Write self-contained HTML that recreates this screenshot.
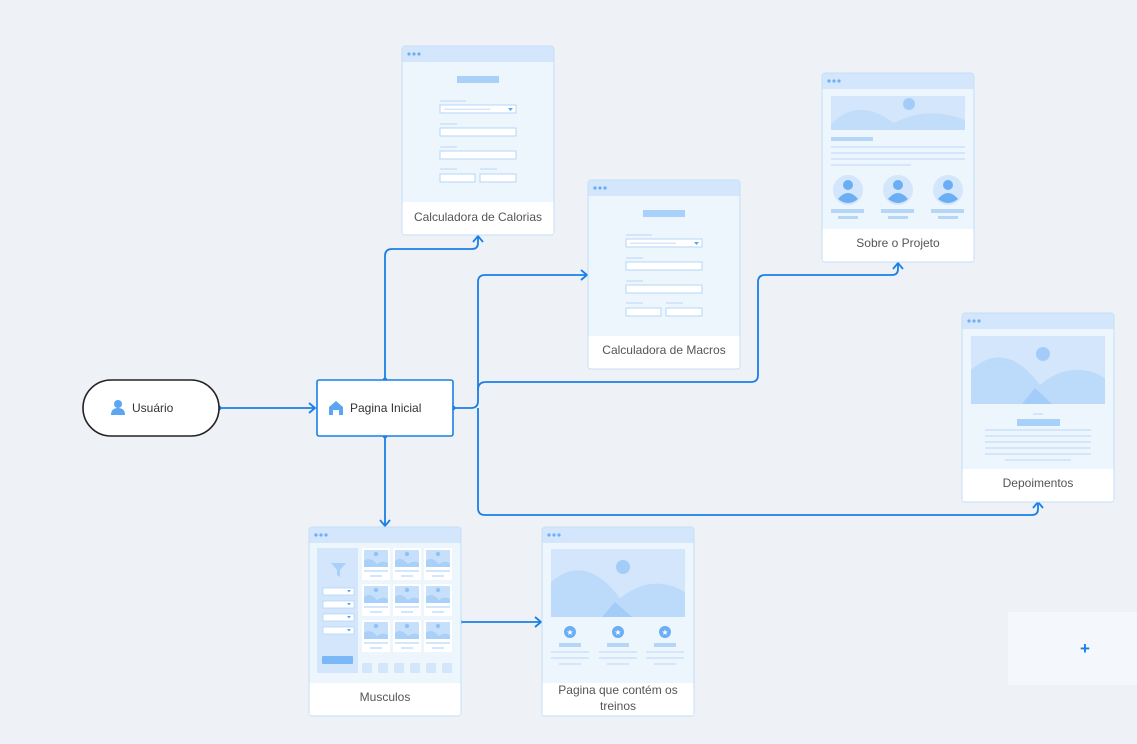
<!DOCTYPE html>
<html><head><meta charset="utf-8"><style>
html,body{margin:0;padding:0;background:#eef2f7;}
svg{display:block}
text{font-family:"Liberation Sans",sans-serif;}
</style></head><body>
<svg width="1137" height="744" viewBox="0 0 1137 744" xmlns="http://www.w3.org/2000/svg">
<rect width="1137" height="744" fill="#eef2f7"/>
<rect x="1008" y="612" width="129" height="73" fill="#f4f7fb"/>
<text x="1085" y="654" font-size="17" font-weight="bold" fill="#1a7fe6" text-anchor="middle">+</text>

<g fill="none" stroke="#1a7fe6" stroke-width="1.8">
<path d="M219 408 H315"/><path d="M309 403 L315 408 L309 413"/>
<path d="M385 380 V256 Q385 249 392 249 H472 Q478 249 478 243 V237"/><path d="M473 242 L478 236 L483 242"/>
<path d="M453 408 H471 Q478 408 478 401 V282 Q478 275 485 275 H587"/><path d="M581 270 L587 275 L581 280"/>
<path d="M478 390 Q478 382 486 382 H751 Q758 382 758 375 V282 Q758 275 765 275 H892 Q898 275 898 269 V264"/><path d="M893 269 L898 263 L903 269"/>
<path d="M478 408 V508 Q478 515 485 515 H1032 Q1038 515 1038 509 V503"/><path d="M1033 508 L1038 502 L1043 508"/>
<path d="M385 436 V526"/><path d="M380 520 L385 526 L390 520"/>
<path d="M460 622 H541"/><path d="M535 617 L541 622 L535 627"/>
</g>
<g fill="#1a7fe6"><circle cx="219" cy="408" r="2.4"/><circle cx="453" cy="408" r="2.4"/><circle cx="385" cy="380" r="2.4"/><circle cx="385" cy="436" r="2.4"/><circle cx="460" cy="622" r="2.4"/></g>

<rect x="83" y="380" width="136" height="56" rx="28" fill="#fff" stroke="#222" stroke-width="1.6"/>
<g fill="#5aa6f2"><circle cx="118" cy="404" r="4"/><path d="M111 415 Q111 408 118 408 Q125 408 125 415 Z"/></g>
<text x="132" y="412" font-size="12" fill="#333">Usuário</text>
<rect x="317" y="380" width="136" height="56" rx="2" fill="#fff" stroke="#1a7fe6" stroke-width="1.6"/>
<path d="M329 415 V407 L336 401 L343 407 V415 H339 V410 H333 V415 Z" fill="#5aa6f2"/>
<text x="350" y="412" font-size="12" fill="#333">Pagina Inicial</text>

<g transform="translate(402,46)">
<rect x="0" y="0" width="152" height="189" rx="3" fill="#fff" stroke="#c4ddf7"/>
<rect x="0.5" y="0.5" width="151" height="16" fill="#d3e6fb"/><rect x="0.5" y="16" width="151" height="140" fill="#edf5fd"/>
<g fill="#6aaef5"><circle cx="7" cy="8" r="1.6"/><circle cx="12" cy="8" r="1.6"/><circle cx="17" cy="8" r="1.6"/></g>
<rect x="55" y="30" width="42" height="7" fill="#a9d0f8"/>
<g fill="#d3e6fb"><rect x="38" y="54" width="26" height="2"/><rect x="38" y="77" width="17" height="2"/><rect x="38" y="100" width="17" height="2"/><rect x="38" y="122" width="17" height="2"/><rect x="78" y="122" width="17" height="2"/></g>
<g fill="#fff" stroke="#b5d6f7"><rect x="38" y="59" width="76" height="8"/><rect x="38" y="82" width="76" height="8"/><rect x="38" y="105" width="76" height="8"/><rect x="38" y="128" width="35" height="8"/><rect x="78" y="128" width="36" height="8"/></g>
<rect x="42" y="62.5" width="46" height="1.5" fill="#d3e6fb"/><path d="M106 62 L111 62 L108.5 65 Z" fill="#5aa6f2"/>
<rect x="0.5" y="156" width="151" height="32" fill="#fff"/>
<text x="76" y="175" font-size="12" fill="#555" text-anchor="middle">Calculadora de Calorias</text>
</g>

<g transform="translate(588,180)">
<rect x="0" y="0" width="152" height="189" rx="3" fill="#fff" stroke="#c4ddf7"/>
<rect x="0.5" y="0.5" width="151" height="16" fill="#d3e6fb"/><rect x="0.5" y="16" width="151" height="140" fill="#edf5fd"/>
<g fill="#6aaef5"><circle cx="7" cy="8" r="1.6"/><circle cx="12" cy="8" r="1.6"/><circle cx="17" cy="8" r="1.6"/></g>
<rect x="55" y="30" width="42" height="7" fill="#a9d0f8"/>
<g fill="#d3e6fb"><rect x="38" y="54" width="26" height="2"/><rect x="38" y="77" width="17" height="2"/><rect x="38" y="100" width="17" height="2"/><rect x="38" y="122" width="17" height="2"/><rect x="78" y="122" width="17" height="2"/></g>
<g fill="#fff" stroke="#b5d6f7"><rect x="38" y="59" width="76" height="8"/><rect x="38" y="82" width="76" height="8"/><rect x="38" y="105" width="76" height="8"/><rect x="38" y="128" width="35" height="8"/><rect x="78" y="128" width="36" height="8"/></g>
<rect x="42" y="62.5" width="46" height="1.5" fill="#d3e6fb"/><path d="M106 62 L111 62 L108.5 65 Z" fill="#5aa6f2"/>
<rect x="0.5" y="156" width="151" height="32" fill="#fff"/>
<text x="76" y="174" font-size="12" fill="#555" text-anchor="middle">Calculadora de Macros</text>
</g>

<g transform="translate(822,73)">
<rect x="0" y="0" width="152" height="189" rx="3" fill="#fff" stroke="#c4ddf7"/>
<rect x="0.5" y="0.5" width="151" height="16" fill="#d3e6fb"/><rect x="0.5" y="16" width="151" height="140" fill="#edf5fd"/>
<g fill="#6aaef5"><circle cx="7" cy="8" r="1.6"/><circle cx="12" cy="8" r="1.6"/><circle cx="17" cy="8" r="1.6"/></g>
<rect x="9" y="23" width="134" height="34" fill="#d3e6fb"/>
<path d="M9 51 Q40 20 80 57 H9 Z" fill="#c2ddfa"/><path d="M60 57 Q100 30 143 47 V57 Z" fill="#c2ddfa"/>
<circle cx="87" cy="31" r="6" fill="#a3cdf8"/>
<g fill="#d3e6fb"><rect x="9" y="64" width="42" height="4" fill="#b5d6f7"/><rect x="9" y="73" width="134" height="2"/><rect x="9" y="79" width="134" height="2"/><rect x="9" y="85" width="134" height="2"/><rect x="9" y="91" width="80" height="2"/></g>
<circle cx="26" cy="117" r="15" fill="#d3e6fb"/><circle cx="76" cy="117" r="15" fill="#d3e6fb"/><circle cx="126" cy="117" r="15" fill="#d3e6fb"/>
<g fill="#6aaef5"><circle cx="26" cy="112" r="5"/><circle cx="76" cy="112" r="5"/><circle cx="126" cy="112" r="5"/>
<path d="M16 126 Q26 114 36 126 Q26 134 16 126Z"/><path d="M66 126 Q76 114 86 126 Q76 134 66 126Z"/><path d="M116 126 Q126 114 136 126 Q126 134 116 126Z"/></g>
<g fill="#b5d6f7"><rect x="9" y="136" width="33" height="4"/><rect x="59" y="136" width="33" height="4"/><rect x="109" y="136" width="33" height="4"/><rect x="16" y="143" width="20" height="3"/><rect x="66" y="143" width="20" height="3"/><rect x="116" y="143" width="20" height="3"/></g>
<rect x="0.5" y="156" width="151" height="32" fill="#fff"/>
<text x="76" y="174" font-size="12" fill="#555" text-anchor="middle">Sobre o Projeto</text>
</g>

<g transform="translate(962,313)">
<rect x="0" y="0" width="152" height="189" rx="3" fill="#fff" stroke="#c4ddf7"/>
<rect x="0.5" y="0.5" width="151" height="16" fill="#d3e6fb"/><rect x="0.5" y="16" width="151" height="140" fill="#edf5fd"/>
<g fill="#6aaef5"><circle cx="7" cy="8" r="1.6"/><circle cx="12" cy="8" r="1.6"/><circle cx="17" cy="8" r="1.6"/></g>
<rect x="9" y="23" width="134" height="68" fill="#d3e6fb"/>
<path d="M9 57 Q50 20 90 91 H9 Z" fill="#bcdafa"/><path d="M60 91 Q100 40 143 65 V91 Z" fill="#bcdafa"/>
<path d="M60 91 L73 75 L90 91 Z" fill="#a3cdf8"/>
<circle cx="81" cy="41" r="7" fill="#a3cdf8"/>
<rect x="71" y="100" width="10" height="2" fill="#d3e6fb"/><rect x="55" y="106" width="43" height="7" fill="#a9d0f8"/>
<g fill="#d3e6fb"><rect x="23" y="116" width="106" height="2"/><rect x="23" y="122" width="106" height="2"/><rect x="23" y="128" width="106" height="2"/><rect x="23" y="134" width="106" height="2"/><rect x="23" y="140" width="106" height="2"/><rect x="43" y="146" width="66" height="2"/></g>
<rect x="0.5" y="156" width="151" height="32" fill="#fff"/>
<text x="76" y="174" font-size="12" fill="#555" text-anchor="middle">Depoimentos</text>
</g>

<g transform="translate(309,527)">
<rect x="0" y="0" width="152" height="189" rx="3" fill="#fff" stroke="#c4ddf7"/>
<rect x="0.5" y="0.5" width="151" height="16" fill="#d3e6fb"/><rect x="0.5" y="16" width="151" height="140" fill="#edf5fd"/>
<g fill="#6aaef5"><circle cx="7" cy="8" r="1.6"/><circle cx="12" cy="8" r="1.6"/><circle cx="17" cy="8" r="1.6"/></g>
<rect x="8" y="21" width="41" height="125" fill="#d3e6fb"/>
<path d="M22 36 H37 L31 43 V50 L28 48 V43 Z" fill="#a9d0f8"/>
<g fill="#fff" stroke="#b5d6f7" stroke-width="0.8"><rect x="14" y="61" width="31" height="7"/><rect x="14" y="74" width="31" height="7"/><rect x="14" y="87" width="31" height="7"/><rect x="14" y="100" width="31" height="7"/></g>
<g fill="#5aa6f2"><path d="M38 63 h4 l-2 2.5z"/><path d="M38 76 h4 l-2 2.5z"/><path d="M38 89 h4 l-2 2.5z"/><path d="M38 102 h4 l-2 2.5z"/></g>
<rect x="13" y="129" width="31" height="8" rx="1" fill="#7ab8f7"/>
<g fill="#fff"><rect x="53" y="21" width="28" height="32"/><rect x="84" y="21" width="28" height="32"/><rect x="115" y="21" width="28" height="32"/><rect x="53" y="57" width="28" height="32"/><rect x="84" y="57" width="28" height="32"/><rect x="115" y="57" width="28" height="32"/><rect x="53" y="93" width="28" height="32"/><rect x="84" y="93" width="28" height="32"/><rect x="115" y="93" width="28" height="32"/></g>
<g fill="#c6e0fb"><rect x="55" y="23" width="24" height="17"/><rect x="86" y="23" width="24" height="17"/><rect x="117" y="23" width="24" height="17"/><rect x="55" y="59" width="24" height="17"/><rect x="86" y="59" width="24" height="17"/><rect x="117" y="59" width="24" height="17"/><rect x="55" y="95" width="24" height="17"/><rect x="86" y="95" width="24" height="17"/><rect x="117" y="95" width="24" height="17"/></g>
<g fill="#a9d0f8"><path d="M55 34 Q62 28 70 40 H55Z M65 40 Q72 32 79 36 V40Z"/><path d="M86 34 Q93 28 101 40 H86Z M96 40 Q103 32 110 36 V40Z"/><path d="M117 34 Q124 28 132 40 H117Z M127 40 Q134 32 141 36 V40Z"/>
<path d="M55 70 Q62 64 70 76 H55Z M65 76 Q72 68 79 72 V76Z"/><path d="M86 70 Q93 64 101 76 H86Z M96 76 Q103 68 110 72 V76Z"/><path d="M117 70 Q124 64 132 76 H117Z M127 76 Q134 68 141 72 V76Z"/>
<path d="M55 106 Q62 100 70 112 H55Z M65 112 Q72 104 79 108 V112Z"/><path d="M86 106 Q93 100 101 112 H86Z M96 112 Q103 104 110 108 V112Z"/><path d="M117 106 Q124 100 132 112 H117Z M127 112 Q134 104 141 108 V112Z"/></g>
<g fill="#d3e6fb"><rect x="55" y="43" width="24" height="2"/><rect x="86" y="43" width="24" height="2"/><rect x="117" y="43" width="24" height="2"/><rect x="55" y="79" width="24" height="2"/><rect x="86" y="79" width="24" height="2"/><rect x="117" y="79" width="24" height="2"/><rect x="55" y="115" width="24" height="2"/><rect x="86" y="115" width="24" height="2"/><rect x="117" y="115" width="24" height="2"/>
<rect x="61" y="48" width="12" height="2"/><rect x="92" y="48" width="12" height="2"/><rect x="123" y="48" width="12" height="2"/><rect x="61" y="84" width="12" height="2"/><rect x="92" y="84" width="12" height="2"/><rect x="123" y="84" width="12" height="2"/><rect x="61" y="120" width="12" height="2"/><rect x="92" y="120" width="12" height="2"/><rect x="123" y="120" width="12" height="2"/></g>
<g fill="#8fc2f7"><circle cx="67" cy="27" r="2.2"/><circle cx="98" cy="27" r="2.2"/><circle cx="129" cy="27" r="2.2"/><circle cx="67" cy="63" r="2.2"/><circle cx="98" cy="63" r="2.2"/><circle cx="129" cy="63" r="2.2"/><circle cx="67" cy="99" r="2.2"/><circle cx="98" cy="99" r="2.2"/><circle cx="129" cy="99" r="2.2"/></g>
<g fill="#d3e6fb"><rect x="53" y="136" width="10" height="10" rx="1"/><rect x="69" y="136" width="10" height="10" rx="1"/><rect x="85" y="136" width="10" height="10" rx="1"/><rect x="101" y="136" width="10" height="10" rx="1"/><rect x="117" y="136" width="10" height="10" rx="1"/><rect x="133" y="136" width="10" height="10" rx="1"/></g>
<rect x="0.5" y="156" width="151" height="32" fill="#fff"/>
<text x="76" y="174" font-size="12" fill="#555" text-anchor="middle">Musculos</text>
</g>

<g transform="translate(542,527)">
<rect x="0" y="0" width="152" height="189" rx="3" fill="#fff" stroke="#c4ddf7"/>
<rect x="0.5" y="0.5" width="151" height="16" fill="#d3e6fb"/><rect x="0.5" y="16" width="151" height="140" fill="#edf5fd"/>
<g fill="#6aaef5"><circle cx="7" cy="8" r="1.6"/><circle cx="12" cy="8" r="1.6"/><circle cx="17" cy="8" r="1.6"/></g>
<rect x="9" y="22" width="134" height="68" fill="#d3e6fb"/>
<path d="M9 55 Q50 20 90 90 H9 Z" fill="#bcdafa"/><path d="M60 90 Q100 40 143 65 V90 Z" fill="#bcdafa"/>
<path d="M60 90 L73 75 L90 90 Z" fill="#a3cdf8"/>
<circle cx="81" cy="40" r="7" fill="#a3cdf8"/>
<g fill="#6aaef5"><circle cx="28" cy="105" r="6"/><circle cx="76" cy="105" r="6"/><circle cx="123" cy="105" r="6"/></g>
<g fill="#fff" font-size="8"><text x="28" y="108" text-anchor="middle">★</text><text x="76" y="108" text-anchor="middle">★</text><text x="123" y="108" text-anchor="middle">★</text></g>
<g fill="#b5d6f7"><rect x="17" y="116" width="22" height="4"/><rect x="65" y="116" width="22" height="4"/><rect x="112" y="116" width="22" height="4"/></g>
<g fill="#d3e6fb"><rect x="9" y="124" width="38" height="2"/><rect x="57" y="124" width="38" height="2"/><rect x="104" y="124" width="38" height="2"/><rect x="9" y="130" width="38" height="2"/><rect x="57" y="130" width="38" height="2"/><rect x="104" y="130" width="38" height="2"/><rect x="17" y="136" width="22" height="2"/><rect x="65" y="136" width="22" height="2"/><rect x="112" y="136" width="22" height="2"/></g>
<rect x="0.5" y="156" width="151" height="32" fill="#fff"/>
<text x="76" y="167" font-size="12" fill="#555" text-anchor="middle">Pagina que contém os</text>
<text x="76" y="183" font-size="12" fill="#555" text-anchor="middle">treinos</text>
</g>
</svg>
</body></html>
